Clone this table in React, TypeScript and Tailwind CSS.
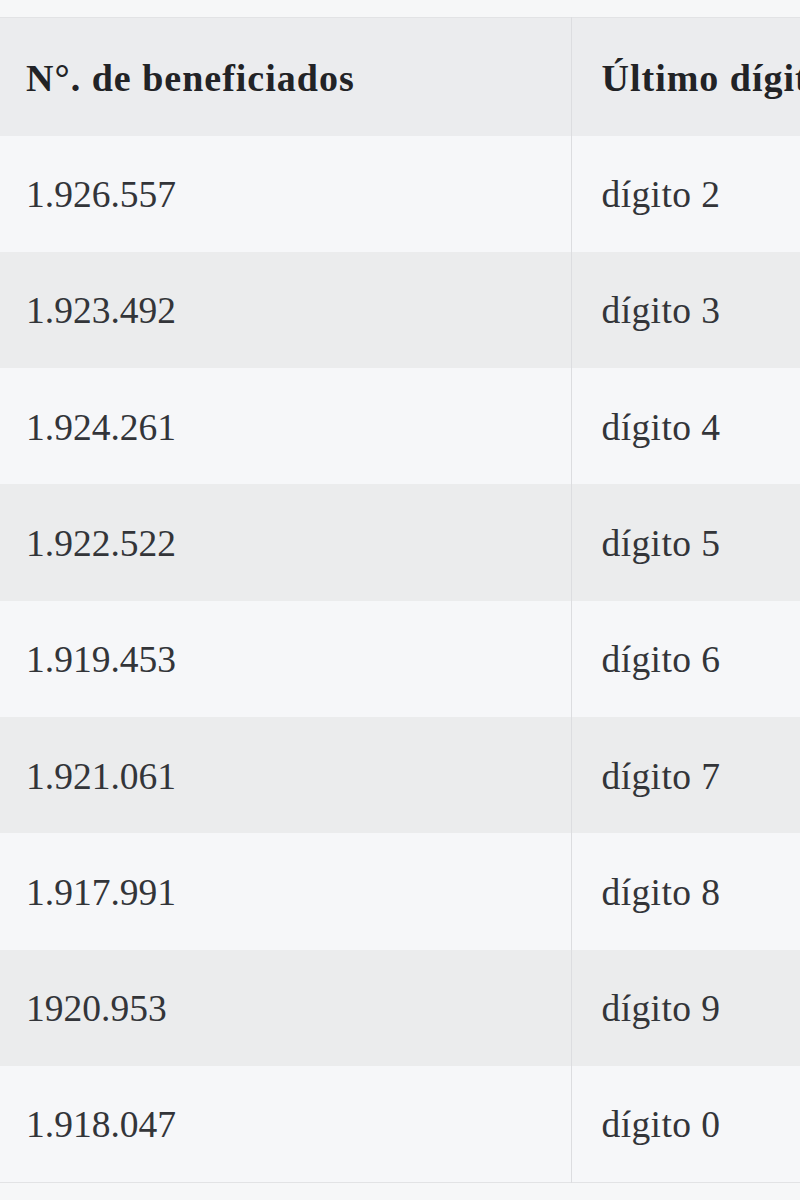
const rows = [
  { total: '1.926.557', digit: 'dígito 2' },
  { total: '1.923.492', digit: 'dígito 3' },
  { total: '1.924.261', digit: 'dígito 4' },
  { total: '1.922.522', digit: 'dígito 5' },
  { total: '1.919.453', digit: 'dígito 6' },
  { total: '1.921.061', digit: 'dígito 7' },
  { total: '1.917.991', digit: 'dígito 8' },
  { total: '1920.953', digit: 'dígito 9' },
  { total: '1.918.047', digit: 'dígito 0' },
]

export default function App() {
  return (
    <div
      className="w-[800px] h-[1200px] overflow-hidden bg-[#f6f7f8] pt-[17px]"
      style={{ fontFamily: '"Liberation Serif", "DejaVu Serif", serif' }}
    >
      <table className="w-[800px] border-collapse table-fixed">
        <colgroup>
          <col className="w-[571px]" />
          <col />
        </colgroup>
        <thead>
          <tr className="bg-[#ebecee] h-[118px] border-t border-[#e2e3e5]">
            <th className="text-left align-middle pl-[26px] pt-[3px] text-[38px] font-bold text-[#222326] tracking-[1px] border-r border-[#dcdde0]">
              N°. de beneficiados
            </th>
            <th className="text-left align-middle pl-[30px] pt-[3px] text-[38px] font-bold text-[#222326] tracking-[1px] whitespace-nowrap overflow-hidden">
              Último dígito
            </th>
          </tr>
        </thead>
        <tbody>
          {rows.map((r, i) => (
            <tr
              key={r.digit}
              className={`h-[116.33px] ${i % 2 === 0 ? 'bg-[#f6f7f9]' : 'bg-[#ebeced]'} ${i === rows.length - 1 ? 'border-b border-[#e2e3e5]' : ''}`}
            >
              <td className="pl-[26px] pt-[3px] align-middle text-[37.5px] text-[#333539] border-r border-[#dcdde0]">{r.total}</td>
              <td className="pl-[30px] pt-[3px] align-middle text-[37.5px] text-[#333539] tracking-[0.4px] whitespace-nowrap">{r.digit}</td>
            </tr>
          ))}
        </tbody>
      </table>
    </div>
  )
}
